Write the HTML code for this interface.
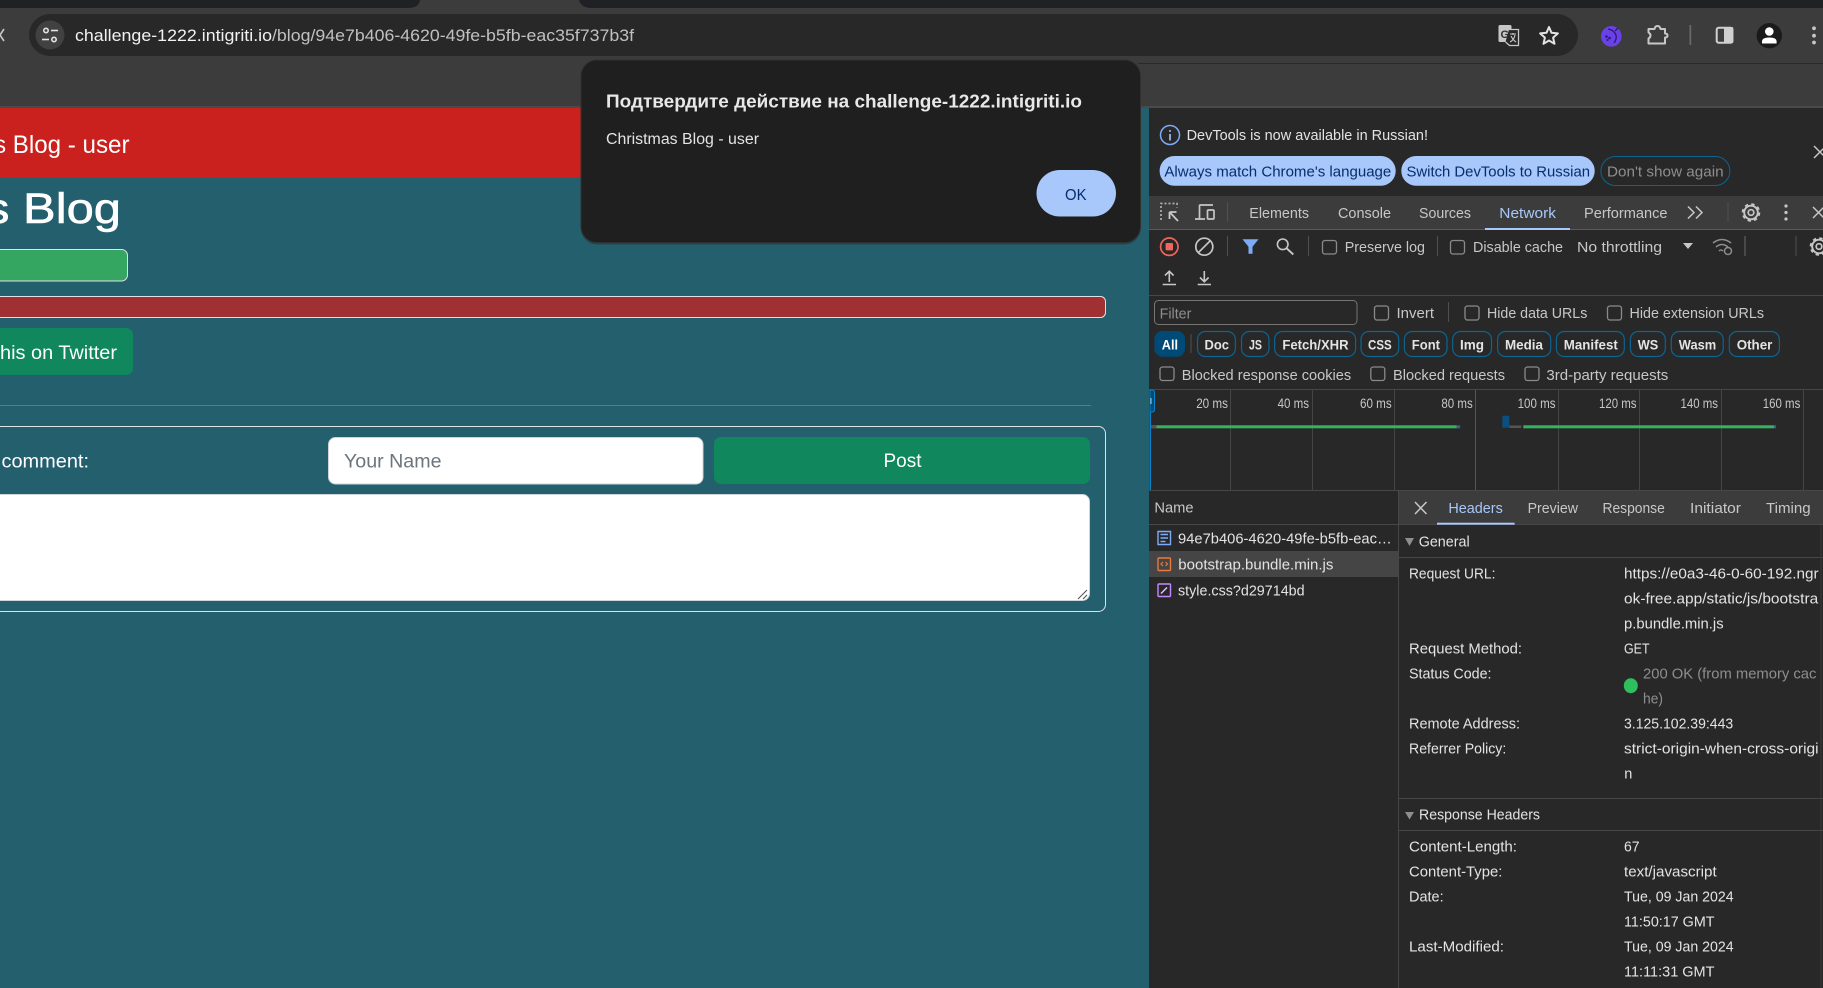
<!DOCTYPE html>
<html lang="en">
<head>
<meta charset="utf-8">
<title>Christmas Blog - user</title>
<style>
html,body{margin:0;padding:0;width:1823px;height:988px;overflow:hidden;background:#3c3c3c}
svg{display:block}
text{font-family:"Liberation Sans","DejaVu Sans",sans-serif;white-space:pre}
.d{font-size:14.5px;fill:#e3e3e3}
.g{font-size:14.5px;fill:#c7c7c7}
.m{font-size:14.5px;fill:#8e8e8e}
.b{font-size:14.5px;fill:#a8c7fa}
.p{font-size:14px;fill:#e3e3e3;font-weight:bold}
.l{font-size:13.5px;fill:#c7c7c7}
.cb{fill:none;stroke:#8a8a8a;stroke-width:1.3}
.sep{stroke:#505050;stroke-width:1}
.pill{fill:none;stroke:#0b6590;stroke-width:1.2}
.grid{stroke:#454545;stroke-width:1}
</style>
</head>
<body>
<svg xmlns="http://www.w3.org/2000/svg" width="1823" height="988" viewBox="0 0 1823 988">
<!-- browser chrome -->
<rect width="1823" height="108" fill="#3c3c3c"/>
<path d="M0 0H420Q419 8 408 8H0Z" fill="#202124"/>
<path d="M579 0H1823V8H592Q581 8 579 0Z" fill="#202124"/>
<rect x="1138" y="63" width="685" height="1" fill="#2a2a2a"/>
<rect y="106" width="1823" height="2" fill="#4a4a4a"/>
<path d="M-4 29L4 41M4 29L-4 41" fill="none" stroke="#c7c7c7" stroke-width="1.6"/>
<rect x="29" y="14" width="1549" height="42" rx="21" fill="#282828"/>
<circle cx="50" cy="35" r="14.5" fill="#414141"/>
<g fill="none" stroke="#e3e3e3" stroke-width="1.6">
<circle cx="46" cy="30.5" r="2.2"/><path d="M51 30.5h7"/><circle cx="54" cy="39.5" r="2.2"/><path d="M42 39.5h7"/>
</g>
<text x="75" y="41" font-size="17" fill="#f1f1f1" textLength="197" lengthAdjust="spacingAndGlyphs">challenge-1222.intigriti.io</text>
<text x="272" y="41" font-size="17" fill="#c0c0c0" textLength="362" lengthAdjust="spacingAndGlyphs">/blog/94e7b406-4620-49fe-b5fb-eac35f737b3f</text>
<!-- translate -->
<rect x="1498.500" y="25" width="13" height="17" rx="1.500" fill="#c7c7c7"/>
<path d="M1509 29.500h9.500v16h-9l-4-3.500" fill="#282828" stroke="#c7c7c7" stroke-width="1.300"/>
<text x="1500.500" y="38" font-size="11" font-weight="bold" fill="#333">G</text>
<path d="M1510 34h6M1513 33v2M1515 35q-1 5-5 7M1511 36q2 4 5 6" fill="none" stroke="#c7c7c7" stroke-width="1.100"/>
<!-- star -->
<path d="M1549 27l2.500 5.800 6.400.6-4.800 4.200 1.400 6.200-5.500-3.300-5.500 3.300 1.400-6.200-4.800-4.200 6.400-.6z" fill="none" stroke="#e3e3e3" stroke-width="2" stroke-linejoin="round"/>
<!-- ext -->
<circle cx="1611.300" cy="36.300" r="10.300" fill="#6a41e8"/>
<path d="M1608 29q6 1 8 6q1 4-2 8M1615 31l3-3" fill="none" stroke="#2b1a6e" stroke-width="1.300"/>
<circle cx="1606.500" cy="36.500" r="1.300" fill="#2b1a6e"/><circle cx="1609.500" cy="38" r="1.300" fill="#2b1a6e"/><circle cx="1607.500" cy="40" r="1" fill="#2b1a6e"/>
<!-- puzzle -->
<path d="M1648.500 29h6q.5-3 3-3t3 3h4.500v4.500q2.500 0 2.500 2t-2.500 2v6h-16.500v-5q2-1 2-3t-2-3z" fill="none" stroke="#c7c7c7" stroke-width="2" stroke-linejoin="round"/>
<rect x="1689.500" y="25" width="1.700" height="20" fill="#6a6a6a"/>
<!-- side panel -->
<rect x="1716.700" y="27.700" width="15.700" height="15" rx="2" fill="none" stroke="#d0d0d0" stroke-width="2"/>
<rect x="1724" y="27" width="9.300" height="16.300" rx="1.500" fill="#d0d0d0"/>
<!-- profile -->
<circle cx="1769.300" cy="35.700" r="12.700" fill="#1a1a1a"/>
<circle cx="1769.300" cy="31.500" r="4.300" fill="#fff"/>
<path d="M1762 43.500v-2q0-4 7.300-4t7.300 4v2z" fill="#fff"/>
<circle cx="1814" cy="28.300" r="1.900" fill="#c7c7c7"/><circle cx="1814" cy="35.700" r="1.900" fill="#c7c7c7"/><circle cx="1814" cy="42.500" r="1.900" fill="#c7c7c7"/>

<!-- page -->
<rect y="108" width="1149" height="880" fill="#245f6e"/>
<rect y="108" width="700" height="70" fill="#cb211e"/>
<text x="-6" y="153" font-size="25" fill="#fff" textLength="135.500" lengthAdjust="spacingAndGlyphs">s Blog - user</text>
<text x="-15" y="223" font-size="43" fill="#fff" stroke="#fff" stroke-width=".6" textLength="136" lengthAdjust="spacingAndGlyphs">s Blog</text>
<rect x="-10" y="249.500" width="137.500" height="31.500" rx="6" fill="#34a661" stroke="#dee2e6"/>
<rect x="-10" y="296.500" width="1115.500" height="21" rx="5" fill="#a03032" stroke="#dee2e6"/>
<rect x="-10" y="328" width="143" height="47" rx="7" fill="#10875c"/>
<text x="0" y="359" font-size="19.500" fill="#fff" textLength="117" lengthAdjust="spacingAndGlyphs">his on Twitter</text>
<rect x="0" y="405" width="1091" height="1" fill="#4f7f8b"/>
<rect x="-10" y="426.500" width="1115.500" height="185" rx="7" fill="none" stroke="#dee2e6"/>
<text x="1.500" y="467.500" font-size="19" fill="#fff" textLength="87.500" lengthAdjust="spacingAndGlyphs">comment:</text>
<rect x="328.500" y="437.500" width="374.500" height="46.500" rx="7" fill="#fff" stroke="#ced4da"/>
<text x="344" y="467.500" font-size="19.500" fill="#6c757d" textLength="97.500" lengthAdjust="spacingAndGlyphs">Your Name</text>
<rect x="714" y="437" width="376" height="47" rx="7" fill="#10875c"/>
<text x="883.500" y="467" font-size="19" fill="#fff" textLength="38" lengthAdjust="spacingAndGlyphs">Post</text>
<rect x="-10" y="494.500" width="1099.500" height="106" rx="7" fill="#fff" stroke="#ced4da"/>
<path d="M1078 599l9-9M1083 599l4-4" stroke="#555" stroke-width="1.100" fill="none"/>

<!-- dialog -->
<rect x="581" y="60" width="559.500" height="182.500" rx="16" fill="#000" opacity=".25" transform="translate(0 2)"/>
<rect x="581" y="60" width="559.500" height="182.500" rx="16" fill="#1f1f1f" stroke="#303030"/>
<text x="606" y="107.500" font-size="18" font-weight="bold" fill="#e8e8e8" textLength="476" lengthAdjust="spacingAndGlyphs">Подтвердите действие на challenge-1222.intigriti.io</text>
<text x="606" y="144" font-size="15.500" fill="#e3e3e3" textLength="153" lengthAdjust="spacingAndGlyphs">Christmas Blog - user</text>
<rect x="1036.500" y="170" width="79.500" height="46.500" rx="23.250" fill="#a8c7fa"/>
<text x="1065" y="200" font-size="15.500" fill="#062e6f" textLength="21.500" lengthAdjust="spacingAndGlyphs">OK</text>

<!-- devtools -->
<rect x="1149" y="108" width="674" height="880" fill="#282828"/>
<circle cx="1170" cy="135" r="9.500" fill="none" stroke="#7cacf8" stroke-width="1.500"/>
<rect x="1169.200" y="134" width="1.600" height="6.500" fill="#a8c7fa"/><rect x="1169.200" y="130" width="1.600" height="1.800" fill="#a8c7fa"/>
<text class="d" x="1186.600" y="140" textLength="241.400" lengthAdjust="spacingAndGlyphs">DevTools is now available in Russian!</text>
<rect x="1159.600" y="156" width="236.100" height="29.700" rx="14.800" fill="#a8c7fa"/>
<text x="1164.400" y="176.700" font-size="14.500" fill="#062e6f" textLength="226.900" lengthAdjust="spacingAndGlyphs">Always match Chrome's language</text>
<rect x="1401.300" y="156" width="193.400" height="29.700" rx="14.800" fill="#a8c7fa"/>
<text x="1406.500" y="176.700" font-size="14.500" fill="#062e6f" textLength="183.500" lengthAdjust="spacingAndGlyphs">Switch DevTools to Russian</text>
<rect x="1600.900" y="156.500" width="129" height="29" rx="14.500" fill="none" stroke="#0b6590"/>
<text class="m" x="1607" y="176.700" textLength="116.600" lengthAdjust="spacingAndGlyphs">Don't show again</text>
<path d="M1814 146l12 12M1826 146l-12 12" stroke="#c7c7c7" stroke-width="1.500" fill="none"/>

<!-- tabs -->
<rect x="1149" y="196" width="674" height="34" fill="#3c3c3c"/>
<rect x="1149" y="229" width="674" height="1" fill="#5a5a5a"/>
<path d="M1161 220v-16.500h16v4" fill="none" stroke="#b0b0b0" stroke-width="1.700" stroke-dasharray="2 2"/>
<path d="M1169.500 212h7M1169.500 212v7M1170 212.500l8 8.500" fill="none" stroke="#c7c7c7" stroke-width="1.800"/>
<path d="M1195 219h10M1199.500 218.500v-12.500q0-1 1-1h12.500" fill="none" stroke="#c7c7c7" stroke-width="1.700"/>
<rect x="1207.500" y="210" width="6.500" height="9" rx="1" fill="none" stroke="#c7c7c7" stroke-width="1.700"/>
<path class="sep" d="M1227.500 202v20"/>
<text class="g" x="1249.300" y="218" textLength="59.700" lengthAdjust="spacingAndGlyphs">Elements</text>
<text class="g" x="1338" y="218" textLength="53" lengthAdjust="spacingAndGlyphs">Console</text>
<text class="g" x="1419" y="218" textLength="52" lengthAdjust="spacingAndGlyphs">Sources</text>
<text class="b" x="1499.300" y="218" textLength="56.700" lengthAdjust="spacingAndGlyphs">Network</text>
<rect x="1485" y="228" width="85" height="2" fill="#a8c7fa"/>
<text class="g" x="1584" y="218" textLength="83.500" lengthAdjust="spacingAndGlyphs">Performance</text>
<path d="M1688 206.500l6 6-6 6M1696 206.500l6 6-6 6" fill="none" stroke="#c7c7c7" stroke-width="1.500"/>
<path class="sep" d="M1728 202v20"/>
<g fill="none" stroke="#c7c7c7">
<circle cx="1751" cy="212.500" r="2.800" stroke-width="1.700"/>
<circle cx="1751" cy="212.500" r="6.800" stroke-width="1.900"/>
<circle cx="1751" cy="212.500" r="8.300" stroke-width="2" stroke-dasharray="3.300 3.220"/>
</g>
<circle cx="1786" cy="206" r="1.600" fill="#c7c7c7"/><circle cx="1786" cy="212.500" r="1.600" fill="#c7c7c7"/><circle cx="1786" cy="219" r="1.600" fill="#c7c7c7"/>
<path d="M1813 207l11 11M1824 207l-11 11" stroke="#c7c7c7" stroke-width="1.500" fill="none"/>

<!-- network toolbar -->
<circle cx="1169.300" cy="246.700" r="8.700" fill="none" stroke="#ee675c" stroke-width="1.700"/>
<rect x="1165.600" y="243" width="7.400" height="7.400" rx="1" fill="#ee675c"/>
<circle cx="1204.300" cy="246.700" r="8.500" fill="none" stroke="#c7c7c7" stroke-width="1.700"/>
<path d="M1198.300 252.700l12-12" stroke="#c7c7c7" stroke-width="1.700"/>
<path class="sep" d="M1227.500 236v20"/>
<path d="M1242.500 239.300h16l-6 7.500v7h-4v-7z" fill="#7cacf8"/>
<circle cx="1282.700" cy="244.300" r="5.300" fill="none" stroke="#c7c7c7" stroke-width="1.600"/>
<path d="M1286.500 248.200l6.800 6.300" stroke="#c7c7c7" stroke-width="1.900"/>
<path class="sep" d="M1308.500 236v20"/>
<rect class="cb" x="1322.500" y="240.500" width="14" height="13.500" rx="2.500"/>
<text class="g" x="1344.700" y="251.800" textLength="80.300" lengthAdjust="spacingAndGlyphs">Preserve log</text>
<path class="sep" d="M1437.500 236v20"/>
<rect class="cb" x="1450.500" y="240.500" width="14" height="13.500" rx="2.500"/>
<text class="g" x="1473" y="251.800" textLength="90" lengthAdjust="spacingAndGlyphs">Disable cache</text>
<text class="g" x="1577" y="251.800" textLength="85" lengthAdjust="spacingAndGlyphs">No throttling</text>
<path d="M1683 243h10l-5 6z" fill="#c7c7c7"/>
<path d="M1713 243q9-7 18 0M1716 247q6-5 12 0M1719 251q2-2 4 0" fill="none" stroke="#8e8e8e" stroke-width="1.500"/>
<circle cx="1728" cy="251" r="3.500" fill="none" stroke="#8e8e8e" stroke-width="1.500"/>
<path d="M1745 236v20" stroke="#6a6a6a" stroke-width="1"/>
<path class="sep" d="M1796 236v20"/>
<g fill="none" stroke="#c7c7c7">
<circle cx="1819" cy="246.500" r="2.800" stroke-width="1.700"/>
<circle cx="1819" cy="246.500" r="6.800" stroke-width="1.900"/>
<circle cx="1819" cy="246.500" r="8.300" stroke-width="2" stroke-dasharray="3.300 3.220"/>
</g>
<path d="M1169.300 282v-10.500M1165 275.500l4.300-4.300 4.300 4.300M1162.700 284.500h13.300" fill="none" stroke="#c7c7c7" stroke-width="1.600"/>
<path d="M1204.300 271v10.500M1200 277.500l4.300 4.300 4.300-4.300M1197.700 284.500h13.300" fill="none" stroke="#c7c7c7" stroke-width="1.600"/>
<rect x="1149" y="295" width="674" height="1" fill="#474747"/>

<!-- filter row -->
<rect x="1154.500" y="300.500" width="202.500" height="24" rx="4" fill="none" stroke="#757575"/>
<text class="m" x="1159.600" y="318.300" textLength="31.800" lengthAdjust="spacingAndGlyphs">Filter</text>
<rect class="cb" x="1374.500" y="306" width="14" height="14" rx="2.500"/>
<text class="g" x="1396.500" y="318" textLength="37.500" lengthAdjust="spacingAndGlyphs">Invert</text>
<path class="sep" d="M1448.500 302v20"/>
<rect class="cb" x="1465" y="306" width="14" height="14" rx="2.500"/>
<text class="g" x="1487" y="318" textLength="100.300" lengthAdjust="spacingAndGlyphs">Hide data URLs</text>
<rect class="cb" x="1607.500" y="306" width="14" height="14" rx="2.500"/>
<text class="g" x="1629.500" y="318" textLength="134.500" lengthAdjust="spacingAndGlyphs">Hide extension URLs</text>

<!-- pills -->
<rect x="1154.400" y="331" width="30.600" height="25.700" rx="8" fill="#004a77"/>
<text class="p" x="1161.800" y="349.300" textLength="16.200" lengthAdjust="spacingAndGlyphs" style="fill:#fff">All</text>
<path class="sep" d="M1191 334v19"/>
<rect class="pill" x="1197.500" y="331.500" width="37.900" height="25" rx="8"/><text class="p" x="1204.500" y="349.300" textLength="24.500" lengthAdjust="spacingAndGlyphs">Doc</text>
<rect class="pill" x="1241.500" y="331.500" width="27.500" height="25" rx="8"/><text class="p" x="1249" y="349.300" textLength="13" lengthAdjust="spacingAndGlyphs">JS</text>
<rect class="pill" x="1274.600" y="331.500" width="81" height="25" rx="8"/><text class="p" x="1282.400" y="349.300" textLength="66.200" lengthAdjust="spacingAndGlyphs">Fetch/XHR</text>
<rect class="pill" x="1361" y="331.500" width="37.700" height="25" rx="8"/><text class="p" x="1368" y="349.300" textLength="23.700" lengthAdjust="spacingAndGlyphs">CSS</text>
<rect class="pill" x="1404.400" y="331.500" width="42.600" height="25" rx="8"/><text class="p" x="1411.800" y="349.300" textLength="28.200" lengthAdjust="spacingAndGlyphs">Font</text>
<rect class="pill" x="1452.700" y="331.500" width="38.800" height="25" rx="8"/><text class="p" x="1460" y="349.300" textLength="24" lengthAdjust="spacingAndGlyphs">Img</text>
<rect class="pill" x="1497.600" y="331.500" width="53.100" height="25" rx="8"/><text class="p" x="1505" y="349.300" textLength="38" lengthAdjust="spacingAndGlyphs">Media</text>
<rect class="pill" x="1556.400" y="331.500" width="67.900" height="25" rx="8"/><text class="p" x="1563.800" y="349.300" textLength="54" lengthAdjust="spacingAndGlyphs">Manifest</text>
<rect class="pill" x="1630.400" y="331.500" width="34.900" height="25" rx="8"/><text class="p" x="1637.800" y="349.300" textLength="20.500" lengthAdjust="spacingAndGlyphs">WS</text>
<rect class="pill" x="1671.300" y="331.500" width="51.900" height="25" rx="8"/><text class="p" x="1678.800" y="349.300" textLength="37.400" lengthAdjust="spacingAndGlyphs">Wasm</text>
<rect class="pill" x="1729.300" y="331.500" width="50.100" height="25" rx="8"/><text class="p" x="1736.700" y="349.300" textLength="35.700" lengthAdjust="spacingAndGlyphs">Other</text>

<!-- row 3 -->
<rect class="cb" x="1160" y="367" width="14" height="13.500" rx="2.500"/>
<text class="g" x="1181.800" y="380" textLength="169.400" lengthAdjust="spacingAndGlyphs">Blocked response cookies</text>
<rect class="cb" x="1370.800" y="367" width="14" height="13.500" rx="2.500"/>
<text class="g" x="1393" y="380" textLength="112" lengthAdjust="spacingAndGlyphs">Blocked requests</text>
<rect class="cb" x="1525" y="367" width="14" height="13.500" rx="2.500"/>
<text class="g" x="1546.400" y="380" textLength="121.900" lengthAdjust="spacingAndGlyphs">3rd-party requests</text>
<rect x="1149" y="389" width="674" height="1" fill="#474747"/>

<!-- timeline -->
<path class="grid" d="M1230.500 390v100M1312.500 390v100M1394.500 390v100M1558.500 390v100M1639.500 390v100M1721.500 390v100M1803.500 390v100"/>
<path d="M1475.500 390v100" stroke="#555" stroke-width="1"/>
<rect x="1149.500" y="390" width="1.500" height="100" fill="#0a84c8"/>
<path d="M1150 390h2q2.500 0 2.500 2.500v17q0 2.500-2.500 2.500h-2z" fill="#004a77" stroke="#0a84c8"/>
<rect x="1150.500" y="398" width="1" height="6" fill="#c7c7c7"/>
<text class="l" x="1196.200" y="408" textLength="31.800" lengthAdjust="spacingAndGlyphs">20 ms</text>
<text class="l" x="1277.600" y="408" textLength="31.400" lengthAdjust="spacingAndGlyphs">40 ms</text>
<text class="l" x="1360" y="408" textLength="31.700" lengthAdjust="spacingAndGlyphs">60 ms</text>
<text class="l" x="1441.400" y="408" textLength="31.300" lengthAdjust="spacingAndGlyphs">80 ms</text>
<text class="l" x="1517.600" y="408" textLength="37.900" lengthAdjust="spacingAndGlyphs">100 ms</text>
<text class="l" x="1599" y="408" textLength="37.500" lengthAdjust="spacingAndGlyphs">120 ms</text>
<text class="l" x="1680.500" y="408" textLength="37.500" lengthAdjust="spacingAndGlyphs">140 ms</text>
<text class="l" x="1762.800" y="408" textLength="37.500" lengthAdjust="spacingAndGlyphs">160 ms</text>
<rect x="1151" y="425" width="5.500" height="3.500" fill="#555"/>
<rect x="1156.500" y="425.300" width="300.100" height="3" fill="#34b45f"/>
<rect x="1456.600" y="425.300" width="3.500" height="3" fill="#3b5f9a"/>
<rect x="1502.400" y="415.700" width="6.900" height="12" fill="#0a4f7e"/>
<rect x="1509.300" y="425.500" width="12" height="2.500" fill="#555"/>
<rect x="1523.300" y="425.300" width="250.700" height="3" fill="#34b45f"/>
<rect x="1774" y="425.300" width="2" height="3" fill="#3b5f9a"/>
<rect x="1149" y="490" width="674" height="1" fill="#474747"/>

<!-- name column -->
<rect x="1149" y="524" width="250" height="1" fill="#474747"/>
<text class="g" x="1154.400" y="512.700" textLength="39.200" lengthAdjust="spacingAndGlyphs">Name</text>
<rect x="1149" y="551" width="249" height="26" fill="#454545"/>
<path d="M1158 531.500h12.500v13h-12.500z" fill="none" stroke="#7cacf8" stroke-width="1.400"/>
<path d="M1160.500 534.500h7.500M1160.500 538h7.500M1160.500 541.500h5" stroke="#7cacf8" stroke-width="1.400"/>
<g transform="translate(0 -.6)">
<text class="g" x="1178" y="544" textLength="213.700" lengthAdjust="spacingAndGlyphs" style="fill:#e3e3e3">94e7b406-4620-49fe-b5fb-eac…</text>
<text class="g" x="1178.300" y="570.300" textLength="155.100" lengthAdjust="spacingAndGlyphs" style="fill:#e3e3e3">bootstrap.bundle.min.js</text>
<text class="g" x="1178" y="596.300" textLength="126.600" lengthAdjust="spacingAndGlyphs" style="fill:#e3e3e3">style.css?d29714bd</text>
</g>
<rect x="1158" y="558" width="12.500" height="12.500" rx="1" fill="none" stroke="#e8793f" stroke-width="1.400"/>
<path d="M1163 562l-2 2 2 2M1165.500 562l2 2-2 2" fill="none" stroke="#e8793f" stroke-width="1.200"/>
<rect x="1158" y="584" width="12.500" height="12.500" rx="1" fill="none" stroke="#c58af9" stroke-width="1.400"/>
<path d="M1161 593.500l6-6" stroke="#e3c6ff" stroke-width="1.400"/>

<!-- details panel -->
<rect x="1398" y="491" width="1" height="497" fill="#474747"/>
<rect x="1399" y="491" width="424" height="33" fill="#3c3c3c"/>
<rect x="1399" y="524" width="424" height="1" fill="#474747"/>
<path d="M1415 502l11.500 12M1426.500 502l-11.500 12" stroke="#c7c7c7" stroke-width="1.500" fill="none"/>
<text class="b" x="1448.400" y="513" textLength="54.400" lengthAdjust="spacingAndGlyphs">Headers</text>
<rect x="1437" y="522.700" width="77.600" height="2" fill="#a8c7fa"/>
<text class="g" x="1527.600" y="513" textLength="50.400" lengthAdjust="spacingAndGlyphs">Preview</text>
<text class="g" x="1602.500" y="513" textLength="62.300" lengthAdjust="spacingAndGlyphs">Response</text>
<text class="g" x="1690" y="513" textLength="51" lengthAdjust="spacingAndGlyphs">Initiator</text>
<text class="g" x="1766" y="513" textLength="44.700" lengthAdjust="spacingAndGlyphs">Timing</text>

<path d="M1405 538h9l-4.500 8z" fill="#8e8e8e"/>
<text class="d" x="1418.700" y="546.600" textLength="51" lengthAdjust="spacingAndGlyphs">General</text>
<rect x="1399" y="557" width="424" height="1" fill="#474747"/>
<rect x="1820.500" y="525" width="1" height="463" fill="#3a3a3a"/>

<g transform="translate(0 -.5)">
<text class="d" x="1409" y="579" textLength="86.400" lengthAdjust="spacingAndGlyphs">Request URL:</text>
<text class="d" x="1624" y="579" textLength="194.600" lengthAdjust="spacingAndGlyphs">https://e0a3-46-0-60-192.ngr</text>
<text class="d" x="1624" y="604" textLength="194.200" lengthAdjust="spacingAndGlyphs">ok-free.app/static/js/bootstra</text>
<text class="d" x="1624" y="629" textLength="99.600" lengthAdjust="spacingAndGlyphs">p.bundle.min.js</text>
<text class="d" x="1409" y="654" textLength="113" lengthAdjust="spacingAndGlyphs">Request Method:</text>
<text class="d" x="1624" y="654" textLength="25.600" lengthAdjust="spacingAndGlyphs">GET</text>
<text class="d" x="1409" y="679" textLength="82.500" lengthAdjust="spacingAndGlyphs">Status Code:</text>
<text class="m" x="1643" y="679" textLength="173.400" lengthAdjust="spacingAndGlyphs">200 OK (from memory cac</text>
<text class="m" x="1643" y="704" textLength="20" lengthAdjust="spacingAndGlyphs">he)</text>
<text class="d" x="1409" y="729" textLength="111" lengthAdjust="spacingAndGlyphs">Remote Address:</text>
<text class="d" x="1624" y="729" textLength="109.200" lengthAdjust="spacingAndGlyphs">3.125.102.39:443</text>
<text class="d" x="1409" y="754" textLength="97.300" lengthAdjust="spacingAndGlyphs">Referrer Policy:</text>
<text class="d" x="1624" y="754" textLength="194.600" lengthAdjust="spacingAndGlyphs">strict-origin-when-cross-origi</text>
<text class="d" x="1624.300" y="779">n</text>
<text class="d" x="1419" y="820" textLength="121" lengthAdjust="spacingAndGlyphs">Response Headers</text>
<text class="d" x="1409" y="852" textLength="108" lengthAdjust="spacingAndGlyphs">Content-Length:</text>
<text class="d" x="1624" y="852" textLength="15.600" lengthAdjust="spacingAndGlyphs">67</text>
<text class="d" x="1409" y="877" textLength="93.400" lengthAdjust="spacingAndGlyphs">Content-Type:</text>
<text class="d" x="1624" y="877" textLength="92.700" lengthAdjust="spacingAndGlyphs">text/javascript</text>
<text class="d" x="1409" y="902" textLength="34.600" lengthAdjust="spacingAndGlyphs">Date:</text>
<text class="d" x="1624" y="902" textLength="109.600" lengthAdjust="spacingAndGlyphs">Tue, 09 Jan 2024</text>
<text class="d" x="1624" y="927" textLength="90.500" lengthAdjust="spacingAndGlyphs">11:50:17 GMT</text>
<text class="d" x="1409" y="952" textLength="95" lengthAdjust="spacingAndGlyphs">Last-Modified:</text>
<text class="d" x="1624" y="952" textLength="109.600" lengthAdjust="spacingAndGlyphs">Tue, 09 Jan 2024</text>
<text class="d" x="1624" y="977" textLength="90.500" lengthAdjust="spacingAndGlyphs">11:11:31 GMT</text>
</g>
<ellipse cx="1630.800" cy="685.700" rx="7" ry="7.500" fill="#2fbf5f"/>

<rect x="1399" y="798" width="424" height="1" fill="#474747"/>
<path d="M1405 812h9l-4.500 7.500z" fill="#8e8e8e"/>
<rect x="1399" y="830" width="424" height="1" fill="#474747"/>
</svg>
</body>
</html>
